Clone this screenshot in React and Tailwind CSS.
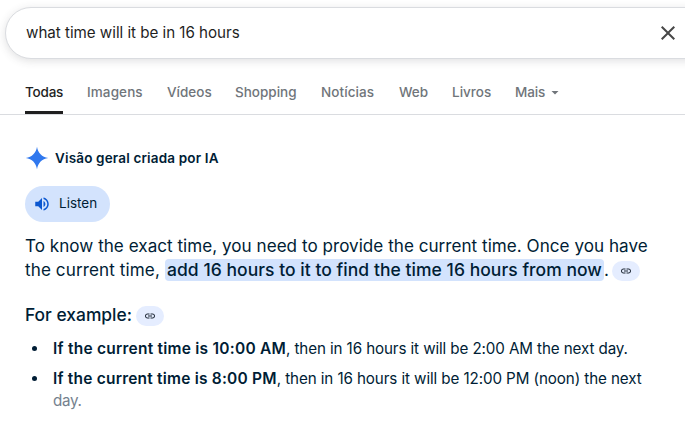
const tabs = [
  { label: "Imagens", box: "w-[80px] tracking-[0.1px]" },
  { label: "Vídeos", box: "w-[68px]" },
  { label: "Shopping", box: "w-[86px]" },
  { label: "Notícias", box: "w-[78px] tracking-[0.08px]" },
  { label: "Web", box: "w-[53px]" },
  { label: "Livros", box: "w-[63px]" },
];

function LinkChip({ className }) {
  return (
    <span className={`flex h-5 w-7 shrink-0 items-center justify-center rounded-full bg-[#e5edff] ${className}`}>
      <svg viewBox="0 0 24 24" className="size-3 fill-[#1f2937]">
        <path d="M3.9 12c0-1.71 1.39-3.1 3.1-3.1h4V7H7c-2.76 0-5 2.24-5 5s2.24 5 5 5h4v-1.9H7c-1.71 0-3.1-1.39-3.1-3.1zM8 13h8v-2H8v2zm9-6h-4v1.9h4c1.71 0 3.1 1.39 3.1 3.1s-1.39 3.1-3.1 3.1h-4V17h4c2.76 0 5-2.24 5-5s-2.24-5-5-5z" />
      </svg>
    </span>
  );
}

function Bullet() {
  return <span className="mt-2 mr-4 ml-[7px] size-[5px] shrink-0 rounded-full bg-[#001d35]" />;
}

export default function App() {
  return (
    <div className="h-[424px] w-[685px] overflow-hidden bg-white font-['Inter','Liberation_Sans',sans-serif] whitespace-nowrap text-[#001d35]">
      <header className="flex h-[115px] flex-col border-b border-[#dadce0] pt-[7px]">
        <div className="ml-[5px] flex h-[52px] w-[760px] shrink-0 items-center rounded-full border border-[#dadce0] bg-white pl-5 shadow-[0_2px_8px_rgba(60,64,67,0.16)]">
          <span className="w-[630px] text-[15.2px] leading-6 tracking-[-0.04px] text-[#1f1f1f]">what time will it be in 16 hours</span>
          <svg viewBox="0 0 24 24" className="h-6 w-6 shrink-0 fill-[#474747]">
            <path d="M19 6.41L17.59 5 12 10.59 6.41 5 5 6.41 10.59 12 5 17.59 6.41 19 12 13.41 17.59 19 19 17.59 13.41 12z" />
          </svg>
        </div>
        <nav className="mt-[23px] flex h-8 pl-[25px] text-[13.5px] leading-5 font-medium text-[#70757a]">
          <span className="mr-6 h-8 w-[38px] border-b-[3px] border-[#1f1f1f] tracking-[-0.2px] text-[#1f1f1f]">Todas</span>
          {tabs.map((tab) => (
            <span key={tab.label} className={`shrink-0 ${tab.box}`}>{tab.label}</span>
          ))}
          <span className="flex h-5 items-center tracking-[-0.1px]">
            Mais
            <svg viewBox="0 0 8 4" className="mt-0.5 ml-1.5 h-1 w-2 fill-[#70757a]">
              <path d="M0.5 0h7L4 3.5z" />
            </svg>
          </span>
        </nav>
      </header>

      <main className="flex flex-col pt-8 pl-[25px]">
        <div className="flex h-[22px] items-center">
          <svg viewBox="0 0 24 24" className="mr-[6px] size-6 shrink-0">
            <path d="M12 0.8C12.9 7 17 11.1 23.2 12C17 12.9 12.9 17 12 23.2C11.1 17 7 12.9 0.8 12C7 11.1 11.1 7 12 0.8Z" fill="#3078ee" />
          </svg>
          <span className="text-[13.5px] leading-5 font-semibold tracking-[0.16px]">Visão geral criada por IA</span>
        </div>

        <button className="mt-[17px] flex h-9 w-[85px] items-center rounded-full bg-[#d3e3fd] pl-2">
          <svg viewBox="0 0 24 24" className="mr-2 h-[18px] w-[18px] fill-[#0b57d0]">
            <path d="M3 9v6h4l5 5V4L7 9H3zm13.5 3c0-1.77-1.02-3.29-2.5-4.03v8.05c1.48-.73 2.5-2.25 2.5-4.02zM14 3.23v2.06c2.89.86 5 3.54 5 6.71s-2.11 5.85-5 6.71v2.06c4.01-.91 7-4.49 7-8.77s-2.99-7.86-7-8.77z" />
          </svg>
          <span className="pb-0.5 text-[13.5px] leading-5">Listen</span>
        </button>

        <div className="mt-3 text-[17.1px] leading-6">
          <div className="tracking-[0.02px]">To know the exact time, you need to provide the current time. Once you have</div>
          <div className="flex">
            <span className="w-[140px] tracking-[0.1px]">the current time,</span>
            <span className="mt-px flex h-[22px] w-[439px] items-center rounded bg-[#d3e3fd] pl-0.5 text-[17.5px] font-medium tracking-[0.04px]">
              add 16 hours to it to find the time 16 hours from now
            </span>
            <span>.</span>
            <LinkChip className="mt-[3px] ml-[3px]" />
          </div>
        </div>

        <div className="mt-[21px] flex h-6 items-center">
          <span className="w-[111px] text-[17.4px] leading-6 font-medium">For example:</span>
          <LinkChip className="mt-px" />
        </div>

        <ul className="mt-[11px] flex flex-col gap-2 text-[15.2px] leading-[22px]">
          <li className="flex">
            <Bullet />
            <p>
              <strong className="text-[15.5px] font-semibold tracking-[0.24px]">If the current time is 10:00 AM</strong>
              <span className="tracking-[-0.11px]">, then in 16 hours it will be 2:00 AM the next day.</span>
            </p>
          </li>
          <li className="flex">
            <Bullet />
            <p>
              <strong className="text-[15.5px] font-semibold tracking-[0.21px]">If the current time is 8:00 PM</strong>
              <span className="tracking-[-0.1px]">, then in 16 hours it will be 12:00 PM (noon) the next</span>
              <br />
              <span className="tracking-[-0.3px] text-[#75828e]">day.</span>
            </p>
          </li>
        </ul>
      </main>
    </div>
  );
}
